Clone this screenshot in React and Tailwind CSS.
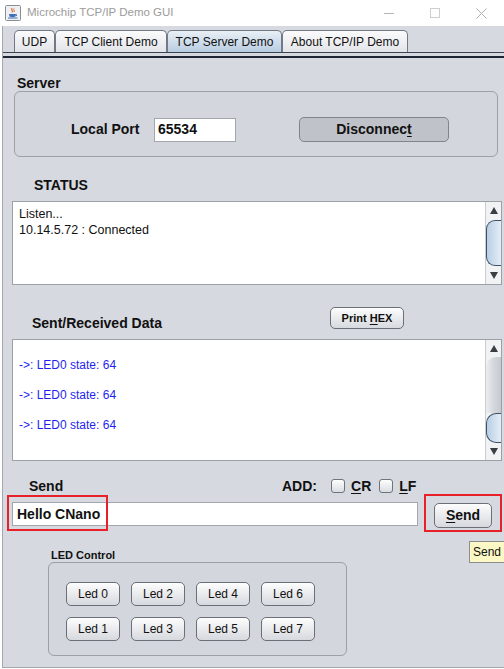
const TABS = [
  { label: 'UDP', w: 'w-[41px]' },
  { label: 'TCP Client Demo', w: 'w-[112px]' },
  { label: 'TCP Server Demo', w: 'w-[115px]', active: true },
  { label: 'About TCP/IP Demo', w: 'w-[126px]' }
];

const LEDS = ['Led 0', 'Led 2', 'Led 4', 'Led 6', 'Led 1', 'Led 3', 'Led 5', 'Led 7'];

const btn =
  'flex items-center justify-center rounded-[5px] border border-[#6b7078] bg-linear-to-b from-[#fdfdfd] to-[#d6d9de] text-[#111]';

function JavaIcon() {
  return (
    <svg width="16" height="16" viewBox="0 0 16 16">
      <rect x="0.5" y="0.5" width="15" height="15" rx="1" fill="#eef0f3" stroke="#8a8f96" />
      <path d="M7 3 C5.5 5 8.5 5.5 7 7.5" stroke="#e0622a" strokeWidth="1.1" fill="none" />
      <path d="M9 3.5 C8 5 10 5.5 9 7" stroke="#e0622a" strokeWidth="1" fill="none" />
      <path d="M4 9 L11 9 L10.5 11.5 Q7.5 13 4.5 11.5 Z" fill="#3f6fb5" />
      <path d="M11 9.5 Q13 9.8 11 11" stroke="#3f6fb5" strokeWidth="0.9" fill="none" />
      <path d="M3 13 L12.5 13" stroke="#3f6fb5" strokeWidth="1" />
    </svg>
  );
}

function Tri({ up }) {
  return (
    <svg width="8" height="7" viewBox="0 0 8 7">
      <polygon points={up ? '4,0 8,7 0,7' : '0,0 8,0 4,7'} fill="#3a3d42" />
    </svg>
  );
}

function ScrollBar({ variant }) {
  return (
    <div className="flex h-full w-[16px] shrink-0 flex-col border-l border-[#c9ccd1] bg-[#f1f2f4]">
      <div className="flex h-[17px] items-center justify-center">
        <Tri up />
      </div>
      {variant === 'status' ? (
        <div className="flex-1 py-[1px]">
          <div className="h-full rounded-l-[9px] border border-r-0 border-[#3f5268] bg-linear-to-r from-[#b9cfe4] to-[#e4edf6]" />
        </div>
      ) : (
        <div className="flex flex-1 flex-col">
          <div className="flex-1 rounded-tl-[10px] bg-linear-to-r from-[#eceef0] via-[#d4d7dc] to-[#c6c9cf]" />
          <div className="h-[30px] rounded-l-[10px] border border-r-0 border-[#3f5268] bg-linear-to-r from-[#b9cfe4] to-[#e4edf6]" />
        </div>
      )}
      <div className="flex h-[17px] items-center justify-center">
        <Tri />
      </div>
    </div>
  );
}

export default function App() {
  return (
    <div className="relative h-[669px] w-[504px] overflow-hidden bg-white font-['Liberation_Sans',Arial,sans-serif] text-[#111]">
      {/* title bar */}
      <div className="flex h-[26px] items-center">
        <div className="ml-[5px] shrink-0">
          <JavaIcon />
        </div>
        <span className="ml-[6px] text-[11.5px] text-[#9b9b9b]">Microchip TCP/IP Demo GUI</span>
        <div className="ml-auto flex shrink-0">
          <div className="flex h-[26px] w-[46px] items-center justify-center">
            <div className="h-px w-[10px] bg-[#b5b5b5]" />
          </div>
          <div className="flex h-[26px] w-[46px] items-center justify-center">
            <div className="h-[10px] w-[10px] border border-[#cfcfcf]" />
          </div>
          <div className="flex h-[26px] w-[46px] items-center justify-center">
            <svg width="11" height="11" viewBox="0 0 11 11">
              <path d="M0.5 0.5 L10.5 10.5 M10.5 0.5 L0.5 10.5" stroke="#b0b0b0" strokeWidth="1" />
            </svg>
          </div>
        </div>
      </div>

      {/* window body */}
      <div className="ml-[2px] h-[642px] border-b border-l border-[#a4a9b1] bg-[#d6d9df]">
        {/* tabs */}
        <div className="flex pl-[11px] pt-[4px]">
          {TABS.map((t) => (
            <div
              key={t.label}
              className={
                t.w +
                ' flex h-[22px] items-center justify-center rounded-t-[5px] border border-b-0 border-[#727884] text-[12px] ' +
                (t.active
                  ? 'bg-linear-to-b from-[#e9eff5] to-[#b8cde2]'
                  : 'bg-linear-to-b from-[#fbfbfc] to-[#e2e4e8]')
              }
            >
              {t.label}
            </div>
          ))}
        </div>
        <div className="h-px bg-[#3c4350]" />
        <div className="h-[3px]" />
        <div className="h-[2px] bg-[#1f2633]" />

        {/* server */}
        <div className="ml-[14px] mt-[17px] h-[16px] text-[14px] font-bold leading-[16px]">Server</div>
        <div className="ml-[11px] h-[66px] w-[484px] rounded-[6px] border border-[#9ca0a7] bg-[#d3d6dc] pt-[25px]">
          <div className="flex h-[25px] items-center">
            <span className="ml-[56px] w-[83px] text-[14px] font-bold">Local Port</span>
            <div className="flex h-[24px] w-[82px] items-center border border-[#a3a7ad] bg-white pl-[3px] text-[14px] font-bold">
              65534
            </div>
            <div className="ml-[63px] flex h-[25px] w-[150px] items-center justify-center rounded-[5px] border border-[#80848b] bg-[#bfc2c8] text-[14px] font-bold">
              Disconnec<span className="underline underline-offset-2">t</span>
            </div>
          </div>
        </div>

        {/* status */}
        <div className="ml-[31px] mt-[20px] h-[16px] text-[14px] font-bold leading-[16px]">STATUS</div>
        <div className="ml-[9px] mt-[8px] flex h-[84px] w-[490px] border border-[#9ca0a7] bg-white">
          <div className="flex-1 pl-[6px] pt-[4px] text-[12.5px] leading-[16px]">
            <div>Listen...</div>
            <div>10.14.5.72 : Connected</div>
          </div>
          <ScrollBar variant="status" />
        </div>

        {/* sent / received */}
        <div className="mt-[22px] flex h-[24px] items-start">
          <span className="ml-[29px] mt-[8px] w-[298px] text-[14px] font-bold leading-[16px]">Sent/Received Data</span>
          <div className={btn + ' h-[22px] w-[74px] text-[11px] font-bold'}>
            Print&nbsp;<span className="underline underline-offset-2">H</span>EX
          </div>
        </div>
        <div className="ml-[9px] mt-[8px] flex h-[122px] w-[490px] border border-[#9ca0a7] bg-white">
          <div className="flex-1 pl-[6px] pt-[17px] text-[12px] leading-[16px] text-[#1f1fee]">
            <div>-&gt;: LED0 state: 64</div>
            <div className="mt-[14px]">-&gt;: LED0 state: 64</div>
            <div className="mt-[14px]">-&gt;: LED0 state: 64</div>
          </div>
          <ScrollBar variant="data" />
        </div>

        {/* send */}
        <div className="mt-[17px] flex h-[16px] items-center text-[14px] font-bold">
          <span className="ml-[26px] w-[253px]">Send</span>
          <span className="w-[35px]">ADD:</span>
          <div className="ml-[14px] h-[14px] w-[14px] rounded-[3px] border border-[#6f747b] bg-linear-to-b from-[#fdfdfd] to-[#dadde2]" />
          <span className="ml-[6px]">
            <span className="underline underline-offset-2">C</span>R
          </span>
          <div className="ml-[8px] h-[14px] w-[14px] rounded-[3px] border border-[#6f747b] bg-linear-to-b from-[#fdfdfd] to-[#dadde2]" />
          <span className="ml-[6px]">
            <span className="underline underline-offset-2">L</span>F
          </span>
        </div>
        <div className="mt-[8px] flex items-start">
          <div className="ml-[9px] flex h-[24px] w-[406px] items-center border border-[#a3a7ad] bg-white pl-[4px] text-[14px] font-bold">
            Hello CNano
          </div>
          <div className={btn + ' ml-[16px] mt-[1px] h-[25px] w-[58px] text-[14px] font-bold'}>
            <span className="underline underline-offset-2">S</span>end
          </div>
        </div>

        {/* led control */}
        <div className="ml-[48px] mt-[20px] h-[14px] text-[11px] font-bold leading-[14px]">LED Control</div>
        <div className="ml-[45px] h-[94px] w-[299px] rounded-[6px] border border-[#9ca0a7] bg-[#d3d6dc] pl-[17px] pt-[19px]">
          <div className="grid grid-cols-[repeat(4,54px)] gap-x-[11px] gap-y-[11px]">
            {LEDS.map((l) => (
              <div key={l} className={btn + ' h-[24px] text-[12px]'}>
                {l}
              </div>
            ))}
          </div>
        </div>
      </div>

      {/* annotations and tooltip */}
      <div className="absolute left-[7px] top-[495px] h-[36px] w-[101px] border-2 border-[#e8202a]" />
      <div className="absolute left-[424px] top-[494px] h-[38px] w-[78px] border-2 border-[#e8202a]" />
      <div className="absolute left-[469px] top-[541px] flex h-[22px] w-[40px] items-center border border-[#8d8d8d] bg-[#fbf8c6] pl-[3px] text-[12px]">
        Send
      </div>
    </div>
  );
}
